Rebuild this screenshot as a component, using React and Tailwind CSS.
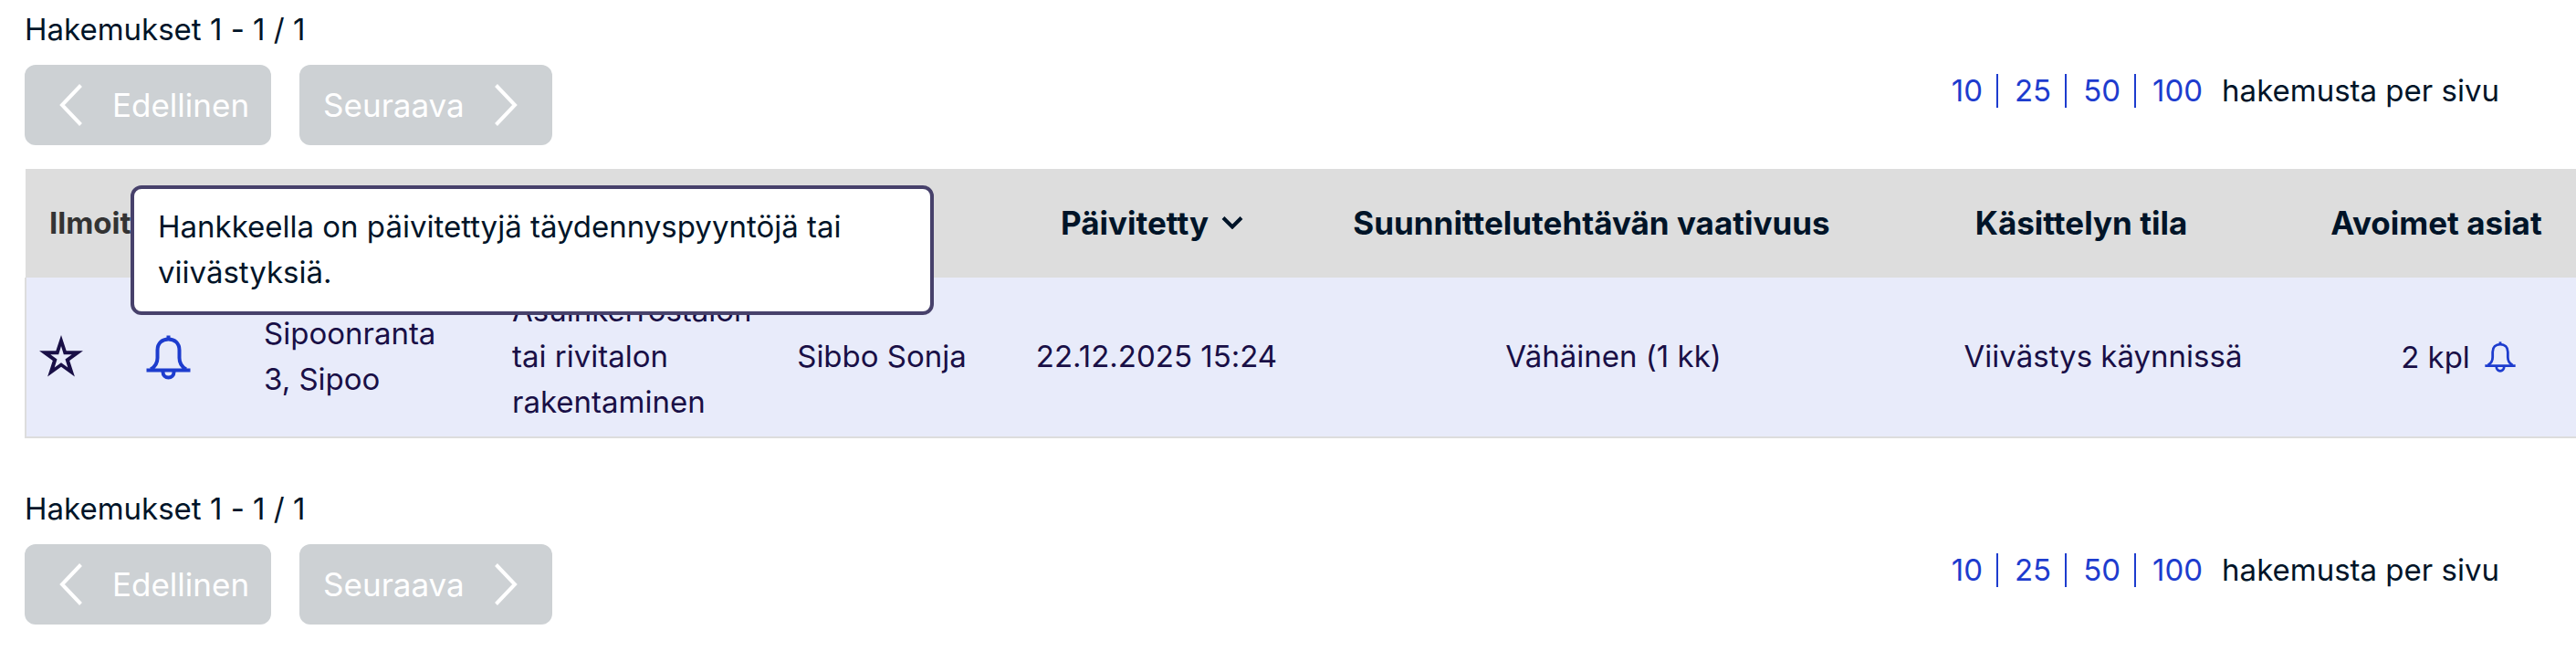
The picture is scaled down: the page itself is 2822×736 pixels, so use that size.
const pageSizes = [10, 25, 50, 100];

function BellIcon({ className }) {
  return (
    <svg viewBox="0 0 49 49" className={className} fill="none" stroke="currentColor" strokeWidth="4" aria-hidden="true">
      <path d="M24.5 0.500V5" />
      <path d="M0.500 38.500H48.500" />
      <path d="M5 37.500C10.500 34.500 12.500 31 12.500 25V16.500C12.500 9 17.500 4.500 24.500 4.500S36.500 9 36.500 16.500V25C36.500 31 38.500 34.500 44 37.500" />
      <path d="M18.500 38.500V40.500A6 6 0 0 0 30.500 40.500V38.500" />
    </svg>
  );
}

function StarIcon() {
  return (
    <svg viewBox="0 0 48 46" className="h-[46px] w-[48px]" aria-hidden="true">
      <path
        fill="currentColor"
        fillRule="evenodd"
        d="M24 0L29.700 17.300H48L33.200 28L38.900 45.400L24 34.700L9.100 45.400L14.800 28L0 17.300H18.300ZM24 12L21.200 21.300H12.300L19.500 26.500L16.700 35.500L24 30.200L31.300 35.500L28.500 26.500L35.700 21.300H26.800Z"
      />
    </svg>
  );
}

function Chevron({ direction }) {
  return (
    <svg viewBox="0 0 25 46" className="h-[46px] w-[25px]" fill="none" stroke="currentColor" strokeWidth="4" aria-hidden="true">
      <path d={direction === "left" ? "M23.500 1.500L3 23L23.500 44.500" : "M1.500 1.500L22 23L1.500 44.500"} />
    </svg>
  );
}

function Pagination({ label }) {
  const button = "flex h-[88px] items-center rounded-xl bg-[#cdd1d4] text-[35px] text-white";
  return (
    <nav aria-label={label} className="flex items-start justify-between pt-[7px]">
      <div className="flex flex-col gap-3.5">
        <p>Hakemukset 1 - 1 / 1</p>
        <div className="flex gap-[31px]">
          <button type="button" disabled className={`${button} gap-[33px] pr-6 pl-[38px]`}>
            <Chevron direction="left" />
            Edellinen
          </button>
          <button type="button" disabled className={`${button} gap-[33px] pr-[38px] pl-[26px]`}>
            Seuraava
            <Chevron direction="right" />
          </button>
        </div>
      </div>
      <div className="flex items-center pt-[74px] pr-[84px]">
        {pageSizes.map((n, i) => (
          <a
            key={n}
            href={`#${n}`}
            className={`leading-[37px] text-[#1d3cce] ${i < 3 ? "mr-[18px] border-r-2 border-[#1d3cce] pr-[15px]" : "mr-[21px]"}`}
          >
            {n}
          </a>
        ))}
        <span className="leading-[37px]">hakemusta per sivu</span>
      </div>
    </nav>
  );
}

function Header({ children, slot }) {
  return (
    <th scope="col" className="p-0 pb-0.5 text-[35px] font-bold">
      <div className={`flex items-center justify-center whitespace-nowrap ${slot ? "pr-12" : ""}`}>{children}</div>
    </th>
  );
}

export default function App() {
  return (
    <main className="overflow-hidden bg-white pl-[27px] font-['Inter',sans-serif] text-[33px] leading-[50px] text-[#001428] [font-variant-ligatures:none]">
      <Pagination label="Sivutus ylhäällä" />
      <div className="relative mt-[26px] mb-[45px]">
        <table className="w-full table-fixed border-collapse">
          <colgroup>
            <col className="w-[79px]" />
            <col className="w-[154px]" />
            <col className="w-[272px]" />
            <col className="w-[308px]" />
            <col className="w-[250px]" />
            <col className="w-[352px]" />
            <col />
            <col className="w-[424px]" />
            <col className="w-[306px]" />
          </colgroup>
          <thead>
            <tr className="h-[119px] bg-[#ddd]">
              <th scope="col" colSpan={2} className="p-0 pb-0.5 pl-[26px] text-left font-bold text-[#333]">Ilmoitukset</th>
              <th scope="col" aria-label="Osoite" />
              <th scope="col" aria-label="Toimenpide" />
              <th scope="col" aria-label="Hakija" />
              <th scope="col" className="p-0 pb-0.5 text-[35px] font-bold">
                <div className="flex items-center justify-center gap-3.5 pr-2.5">
                  Päivitetty
                  <svg viewBox="0 0 24 14" className="h-3.5 w-6" fill="none" stroke="currentColor" strokeWidth="4" aria-hidden="true">
                    <path d="M2 1.500L12 11.500L22 1.500" />
                  </svg>
                </div>
              </th>
              <Header slot>Suunnittelutehtävän vaativuus</Header>
              <Header slot>Käsittelyn tila</Header>
              <Header>Avoimet asiat</Header>
            </tr>
          </thead>
          <tbody>
            <tr className="h-[175px] border-b-2 border-l-2 border-[#ddd] bg-[#e8ebfa] text-center text-[#190f46]">
              <td className="p-0 pr-0.5 pb-0.5">
                <button type="button" aria-label="Lisää suosikkeihin" className="mx-auto flex">
                  <StarIcon />
                </button>
              </td>
              <td className="p-0">
                <button type="button" aria-label="Näytä ilmoitus" className="mx-auto flex text-[#1d3cce]">
                  <BellIcon className="size-[49px]" />
                </button>
              </td>
              <td className="px-7 pb-0.5 text-left">Sipoonranta 3, Sipoo</td>
              <td className="px-7 pb-0.5 text-left">Asuinkerrostalon tai rivitalon rakentaminen</td>
              <td className="p-0 pb-0.5">Sibbo Sonja</td>
              <td className="p-0 pb-0.5">22.12.2025 15:24</td>
              <td className="p-0 pb-0.5">Vähäinen (1 kk)</td>
              <td className="p-0 pb-0.5">Viivästys käynnissä</td>
              <td className="p-0 pl-12">
                <div className="flex items-center justify-center gap-4">
                  2 kpl
                  <BellIcon className="size-[34px] text-[#1d3cce]" />
                </div>
              </td>
            </tr>
          </tbody>
        </table>
        <div role="tooltip" className="absolute top-[18px] left-[116px] w-[880px] rounded-xl border-4 border-[#47416b] bg-white px-[26px] pt-4 pb-[18px]">
          Hankkeella on päivitettyjä täydennyspyyntöjä tai viivästyksiä.
        </div>
      </div>
      <Pagination label="Sivutus alhaalla" />
    </main>
  );
}
